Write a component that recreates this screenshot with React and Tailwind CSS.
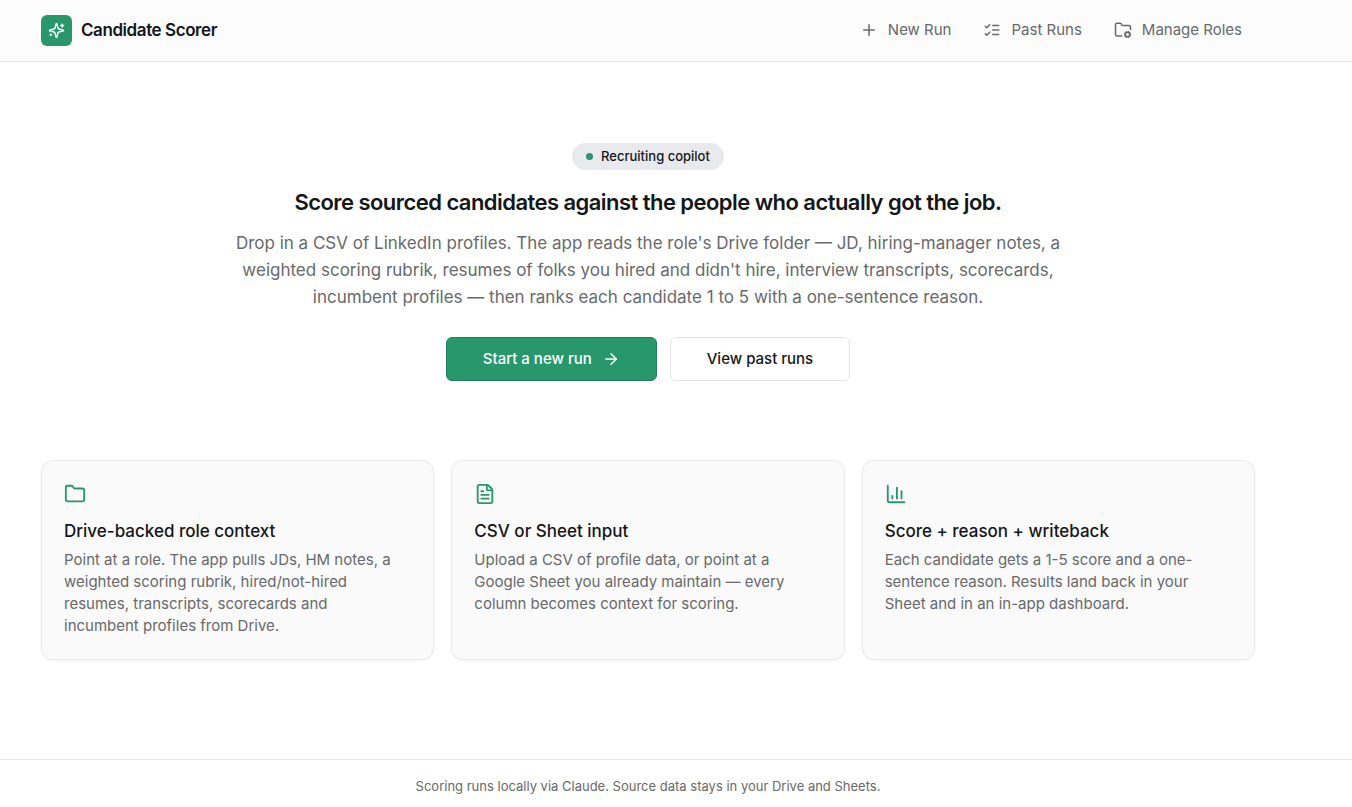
import React from "react";
import { ArrowRight, ChartColumn, FileText, Folder, FolderCog, Plus } from "lucide-react";

function StrokeIcon({ size, children }) {
  return (
    <svg
      width={size}
      height={size}
      viewBox="0 0 24 24"
      fill="none"
      stroke="currentColor"
      strokeWidth="2"
      strokeLinecap="round"
      strokeLinejoin="round"
      aria-hidden="true"
    >
      {children}
    </svg>
  );
}

function SparklesIcon({ size }) {
  return (
    <StrokeIcon size={size}>
      <path d="M9.937 15.5A2 2 0 0 0 8.5 14.063l-6.135-1.582a.5.5 0 0 1 0-.962L8.5 9.936A2 2 0 0 0 9.937 8.5l1.582-6.135a.5.5 0 0 1 .963 0L14.063 8.5A2 2 0 0 0 15.5 9.937l6.135 1.581a.5.5 0 0 1 0 .964L15.5 14.063a2 2 0 0 0-1.437 1.437l-1.582 6.135a.5.5 0 0 1-.963 0z" />
      <path d="M20 3v4M22 5h-4M4 17v2M5 18H3" />
    </StrokeIcon>
  );
}

function ListChecksIcon({ size }) {
  return (
    <StrokeIcon size={size}>
      <path d="m3 17 2 2 4-4M3 7l2 2 4-4M13 6h8M13 12h8M13 18h8" />
    </StrokeIcon>
  );
}

const navItems = [
  { label: "New Run", icon: Plus },
  { label: "Past Runs", icon: ListChecksIcon },
  { label: "Manage Roles", icon: FolderCog },
];

const features = [
  {
    icon: Folder,
    title: "Drive-backed role context",
    body: "Point at a role. The app pulls JDs, HM notes, a weighted scoring rubrik, hired/not-hired resumes, transcripts, scorecards and incumbent profiles from Drive.",
  },
  {
    icon: FileText,
    title: "CSV or Sheet input",
    body: "Upload a CSV of profile data, or point at a Google Sheet you already maintain — every column becomes context for scoring.",
  },
  {
    icon: ChartColumn,
    title: "Score + reason + writeback",
    body: "Each candidate gets a 1-5 score and a one-sentence reason. Results land back in your Sheet and in an in-app dashboard.",
  },
];

function Header() {
  return (
    <header className="flex h-[62px] items-center justify-between border-b border-[#e5e7e9] bg-[#fcfcfc] pr-24 pb-px pl-[41px]">
      <a href="#" className="flex items-center gap-[9px]">
        <span className="flex size-[31px] items-center justify-center rounded-md bg-[#28976c] text-white">
          <SparklesIcon size={17} />
        </span>
        <span className="text-[17px] leading-7 font-semibold tracking-tight">Candidate Scorer</span>
      </a>
      <nav className="flex items-center gap-1">
        {navItems.map(({ label, icon: Icon }) => (
          <a
            key={label}
            href="#"
            className="flex items-center gap-2.5 rounded-md px-[14px] py-2 text-[15px] leading-6 text-[#67696b]"
          >
            <Icon size={18} />
            {label}
          </a>
        ))}
      </nav>
    </header>
  );
}

function Hero() {
  return (
    <section className="flex flex-col items-center pt-[81px] text-center">
      <span className="flex h-[27px] items-center gap-2 rounded-full bg-[#e9eaee] px-[14px] text-[13px] font-medium">
        <span className="size-[7px] rounded-full bg-[#28976c]" />
        Recruiting copilot
      </span>
      <h1 className="mt-4 text-[22px] leading-8 font-semibold tracking-tight">
        Score sourced candidates against the people who actually got the job.
      </h1>
      <p className="mt-3 max-w-[845px] text-[17px] leading-[27px] text-[#67696b]">
        Drop in a CSV of LinkedIn profiles. The app reads the role's Drive folder — JD,
        hiring-manager notes, a weighted scoring rubrik, resumes of folks you hired and didn't
        hire, interview transcripts, scorecards, incumbent profiles — then ranks each candidate
        1 to 5 with a one-sentence reason.
      </p>
      <div className="mt-[26px] flex gap-[13px]">
        <button
          type="button"
          className="flex h-11 items-center gap-2.5 rounded-md border border-[#257e5c] bg-[#28976c] px-9 text-[15px] font-medium text-white"
        >
          Start a new run
          <ArrowRight size={18} />
        </button>
        <button
          type="button"
          className="flex h-11 items-center rounded-md border border-[#e3e4e6] bg-white px-9 text-[15px] font-medium"
        >
          View past runs
        </button>
      </div>
    </section>
  );
}

function FeatureCard({ icon: Icon, title, body }) {
  return (
    <article className="rounded-xl border border-[#ebebec] bg-[#fafafa] p-[22px] shadow-xs">
      <Icon size={22} className="text-[#28976c]" />
      <h2 className="mt-3 text-[17px] leading-7 font-medium">{title}</h2>
      <p className="mt-1 max-w-[340px] text-[15px] leading-[22px] text-[#67696b]">{body}</p>
    </article>
  );
}

export default function App() {
  return (
    <div className="flex min-h-screen flex-col bg-white font-['Inter',sans-serif] text-[#141618]">
      <Header />
      <main className="flex-1 pr-[97px] pb-[99px] pl-[41px]">
        <Hero />
        <section className="mt-[79px] grid grid-cols-3 gap-[17px]">
          {features.map((feature) => (
            <FeatureCard key={feature.title} {...feature} />
          ))}
        </section>
      </main>
      <footer className="border-t border-[#e5e7e9] pt-4 pr-[97px] pb-[17px] pl-[41px] text-center text-[13px] leading-5 text-[#67696b]">
        Scoring runs locally via Claude. Source data stays in your Drive and Sheets.
      </footer>
    </div>
  );
}
